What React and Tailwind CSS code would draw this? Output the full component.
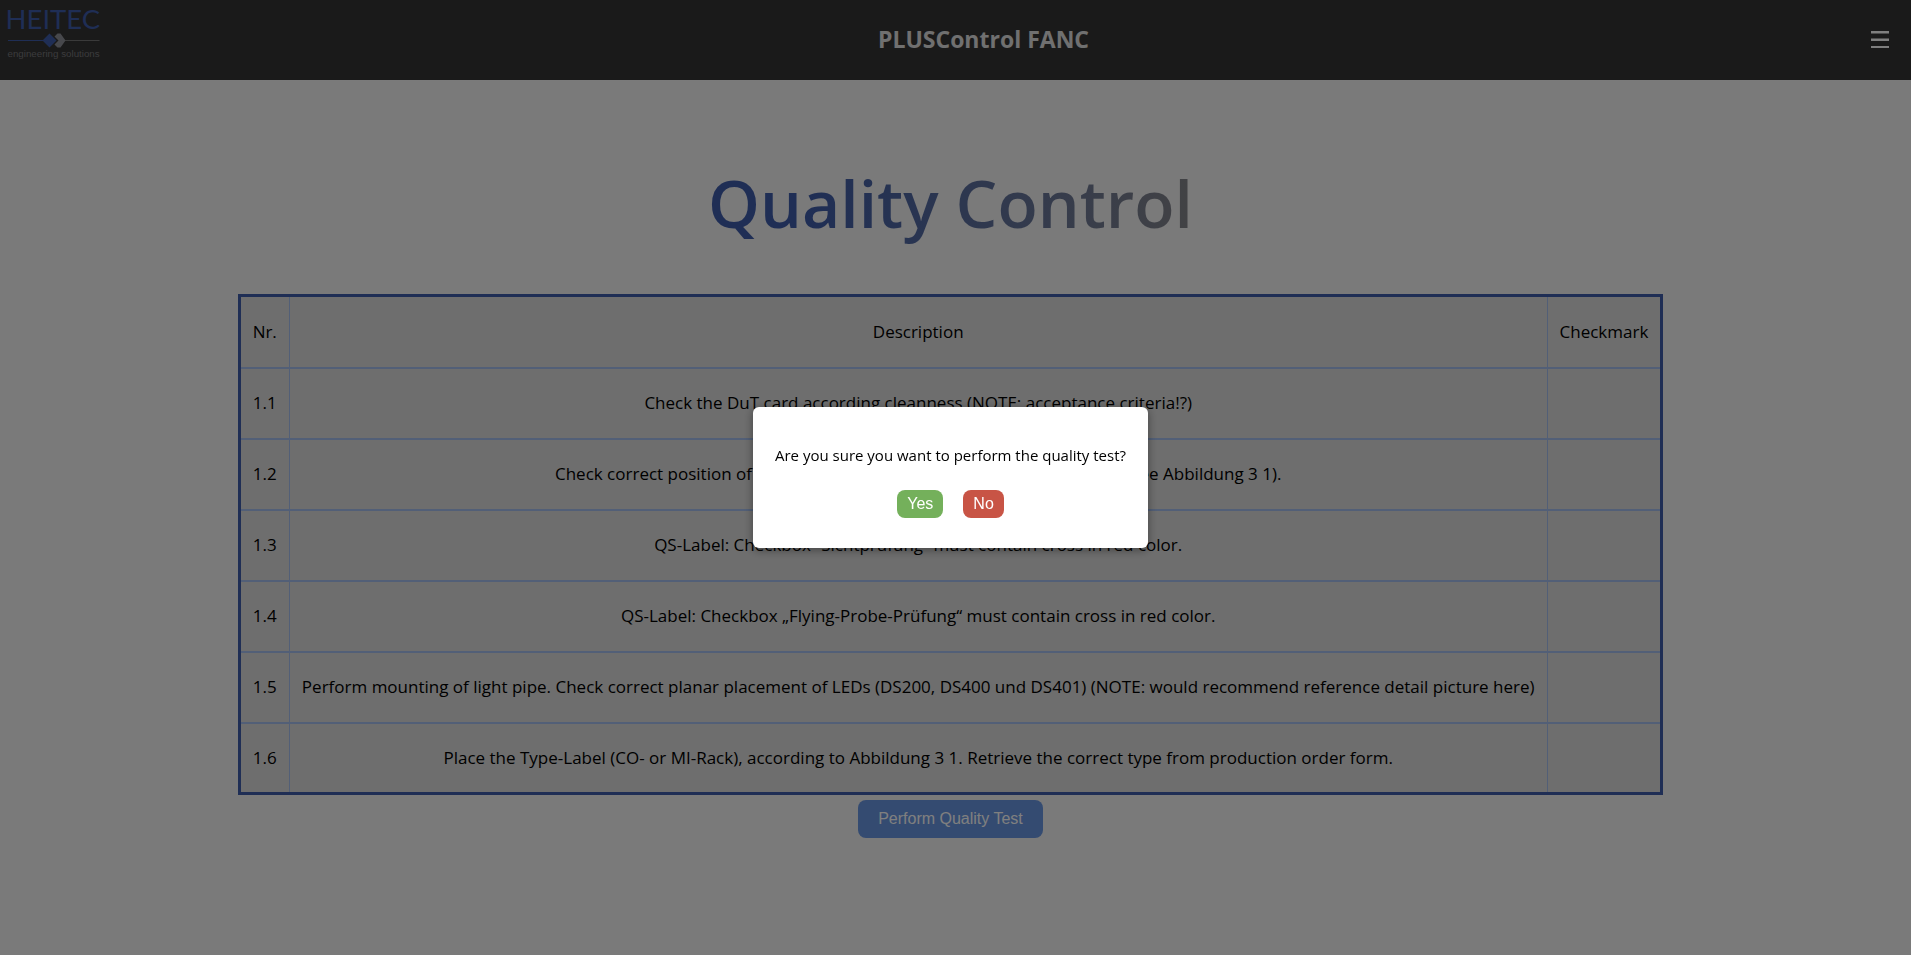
const rows = [
  ["1.1", "Check the DuT card according cleanness (NOTE: acceptance criteria!?)"],
  ["1.2", "Check correct position of all mechanical parts and the front panel labels (see Abbildung 3 1)."],
  ["1.3", "QS-Label: Checkbox “Sichtprüfung“ must contain cross in red color."],
  ["1.4", "QS-Label: Checkbox „Flying-Probe-Prüfung“ must contain cross in red color."],
  ["1.5", "Perform mounting of light pipe. Check correct planar placement of LEDs (DS200, DS400 und DS401) (NOTE: would recommend reference detail picture here)"],
  ["1.6", "Place the Type-Label (CO- or MI-Rack), according to Abbildung 3 1. Retrieve the correct type from production order form."],
];

const cell = "border-x border-y-2 border-[#a5bfee] px-3 font-normal whitespace-nowrap";

function Logo() {
  return (
    <svg viewBox="0 0 192 128" className="h-16 w-24" role="img" aria-label="HEITEC engineering solutions">
      <text x="3" y="58" fontFamily="Lato, sans-serif" fontSize="55" fill="#3e5caa">HEITEC</text>
      <path d="M8 81H80" stroke="#3e5caa" strokeWidth="2" />
      <path d="M120 81H191" stroke="#747474" strokeWidth="2" />
      <path d="M91 67 105 81 91 95 77 81Z" fill="#3e5caa" />
      <path d="M101 73 107 67H113L123 81 113 95H107L101 89 109 81Z" fill="#8f9098" />
      <text x="7" y="113" fontFamily="Liberation Sans, sans-serif" fontSize="19.5" fill="#77777b">engineering solutions</text>
    </svg>
  );
}

function Header() {
  return (
    <header className="flex h-20 items-center justify-between bg-[#343434] pr-[18px] pl-1">
      <a href="#" className="self-start"><Logo /></a>
      <h1 className="pb-0.5 text-[23px] font-bold text-[#e0e0e0]">PLUSControl FANC</h1>
      <button type="button" aria-label="Menu" className="p-1 text-white">
        <svg viewBox="0 0 18 18" className="size-[18px]" fill="currentColor">
          <path d="M0 0h18v2.500H0zM0 7.500h18v2.500H0zM0 15h18v2H0z" />
        </svg>
      </button>
    </header>
  );
}

function ConfirmDialog() {
  return (
    <div className="fixed inset-0 flex items-center justify-center bg-black/50 pr-2.5">
      <div role="dialog" aria-modal="true" aria-labelledby="confirm-text" className="rounded-md bg-white px-[22px] pt-9 pb-[30px] text-center shadow-[0_2px_10px_rgba(0,0,0,0.4)]">
        <p id="confirm-text" className="text-[15px] leading-6 text-black">Are you sure you want to perform the quality test?</p>
        <div className="mt-[23px] flex justify-center gap-5 font-['Liberation_Sans',sans-serif] text-base leading-[18px] text-white">
          <button type="button" className="rounded-lg bg-[#74b05b] px-2.5 py-[5px]">Yes</button>
          <button type="button" className="rounded-lg bg-[#c85445] px-2.5 py-[5px]">No</button>
        </div>
      </div>
    </div>
  );
}

export default function App() {
  return (
    <div className="min-h-screen bg-[#f4f4f4] font-['Open_Sans',sans-serif] text-black">
      <Header />
      <main className="flex flex-col items-center pt-[78px] pr-2.5">
        <h2 className="bg-linear-to-r from-[#3e5caa] from-20% to-[#85858a] bg-clip-text text-[66px] leading-[88px] font-semibold text-transparent">Quality Control</h2>
        <table className="mt-12 w-3/4 border-collapse border-3 border-[#3e5caa] bg-[#dcdcdc] text-center text-[17px]">
          <thead>
            <tr className="h-[72px]">
              <th className={cell}>Nr.</th>
              <th className={`${cell} w-full`}>Description</th>
              <th className={cell}>Checkmark</th>
            </tr>
          </thead>
          <tbody>
            {rows.map(([nr, text]) => (
              <tr key={nr} className="h-[71px]">
                <td className={cell}>{nr}</td>
                <td className={cell}>{text}</td>
                <td className={cell}></td>
              </tr>
            ))}
          </tbody>
        </table>
        <button type="button" className="mt-[5px] rounded-lg bg-[#6896e2] px-5 py-2.5 font-['Liberation_Sans',sans-serif] text-base leading-[18px] text-white">Perform Quality Test</button>
      </main>
      <ConfirmDialog />
    </div>
  );
}
